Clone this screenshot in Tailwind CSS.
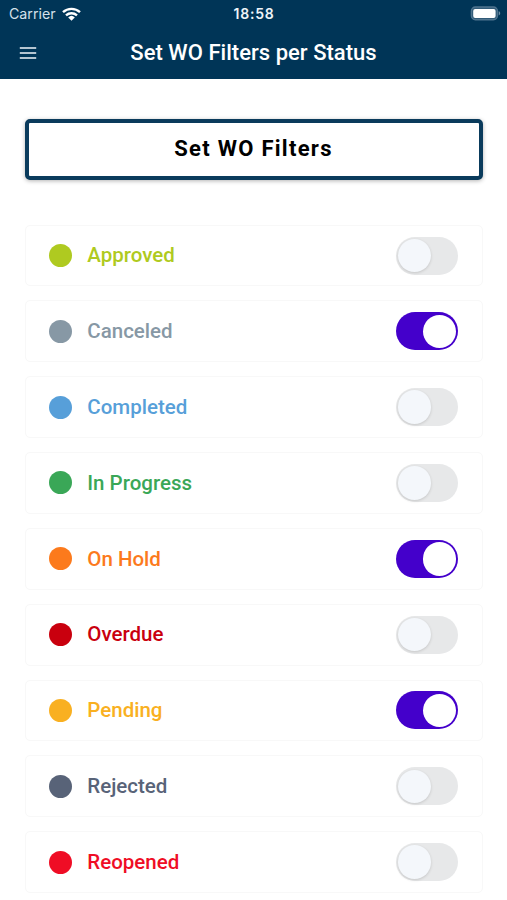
<!DOCTYPE html>
<html lang="en">
<head>
<meta charset="utf-8">
<meta name="viewport" content="width=device-width, initial-scale=1">
<title>Set WO Filters per Status</title>
<script src="https://cdn.jsdelivr.net/npm/@tailwindcss/browser@4"></script>
</head>
<body class="h-[900px] overflow-hidden bg-white font-[Roboto,sans-serif]">
<header class="h-[79px] bg-[#003557] text-white">
  <div class="grid h-[27px] grid-cols-3 items-center pr-[6px] pl-[9px]">
    <div class="flex items-center gap-[6px] pt-px">
      <span class="font-[Inter,sans-serif] text-[14.2px] leading-none text-[#d5e1ea]">Carrier</span>
      <svg class="h-[14px] w-[19px]" viewBox="0 0 19 14" fill="none" stroke="#fff" stroke-width="2.4">
        <path d="M1 5.2C5.800.7 13.200.7 18 5.200"/>
        <path d="M4 8.400c3.200-2.900 7.800-2.900 11 0"/>
        <path d="M6.200 10.400a4.800 4.800 0 0 1 6.600 0L9.500 13.800z" fill="#fff" stroke="none"/>
      </svg>
    </div>
    <span class="pr-[2px] text-center font-[Inter,sans-serif] text-[14px] leading-none font-semibold tracking-[0.8px] text-[#eef4f8]">18:58</span>
    <svg class="h-[15px] w-[31px] justify-self-end" viewBox="0 0 31 15">
      <rect x="1.400" y="1" width="26" height="12.800" rx="4" fill="#315b78" stroke="#4f748f" stroke-width="1.400"/>
      <rect x="3.200" y="2.900" width="22.400" height="9" rx="2" fill="#fff"/>
      <path d="M28.700 5.200c2 .7 2 3.500 0 4.200z" fill="#6f8ea5"/>
    </svg>
  </div>
  <div class="grid h-[52px] grid-cols-[60px_1fr_60px] items-center">
    <svg class="ml-[19px] h-[14px] w-[18px]" viewBox="0 0 18 14" stroke="#b4c5d1" stroke-width="2"><path d="M.800 2h16.400M.800 7h16.400M.800 12h16.400"/></svg>
    <h1 class="text-center text-[22px] leading-none font-medium tracking-[0.03px] whitespace-nowrap">Set WO Filters per Status</h1>
  </div>
</header>
<main class="pt-[39.600px] pr-[24px] pl-[25px]">
  <button class="flex h-[61px] w-full items-center justify-center rounded-[5px] border-4 border-[#0a3b5c] bg-white pr-px text-[22px] leading-none font-bold tracking-[1.270px] text-black shadow-[0_1px_4px_rgba(0,0,0,0.3)]">Set WO Filters</button>
  <ul id="statuses" class="mt-[45px] flex flex-col gap-[14px]"></ul>
</main>
<script>
const statuses = [
  ["Approved", "#afca20", false],
  ["Canceled", "#8798a5", true],
  ["Completed", "#579fd9", false],
  ["In Progress", "#3aa757", false],
  ["On Hold", "#fc7a1c", true],
  ["Overdue", "#c9000e", false],
  ["Pending", "#f9b021", true],
  ["Rejected", "#586378", false],
  ["Reopened", "#ef0d25", false]
];
document.getElementById("statuses").innerHTML = statuses.map(([name, color, on]) => `
  <li class="flex h-[61.830px] items-center rounded-[5px] border border-[#f8f8f8] bg-white pr-[24px] pl-[23px]" style="color:${color}">
    <span class="size-[23px] rounded-full bg-current"></span>
    <span class="ml-[15.300px] flex-1 text-[20.500px] leading-none font-medium">${name}</span>
    <span role="switch" aria-checked="${on}" class="${on
      ? "flex h-[38px] w-[62.500px] items-center justify-end rounded-full bg-[#4400cb] px-[2px]"
      : "flex h-[38px] w-[62.500px] items-center justify-start rounded-full bg-[#e7e8e9] px-[2px]"}">
      <span class="${on
        ? "size-[33.500px] rounded-full bg-white"
        : "size-[33.500px] rounded-full bg-[#f4f7fb] shadow-[0_1px_3px_rgba(0,0,0,0.15)]"}"></span>
    </span>
  </li>`).join("");
</script>
</body>
</html>
